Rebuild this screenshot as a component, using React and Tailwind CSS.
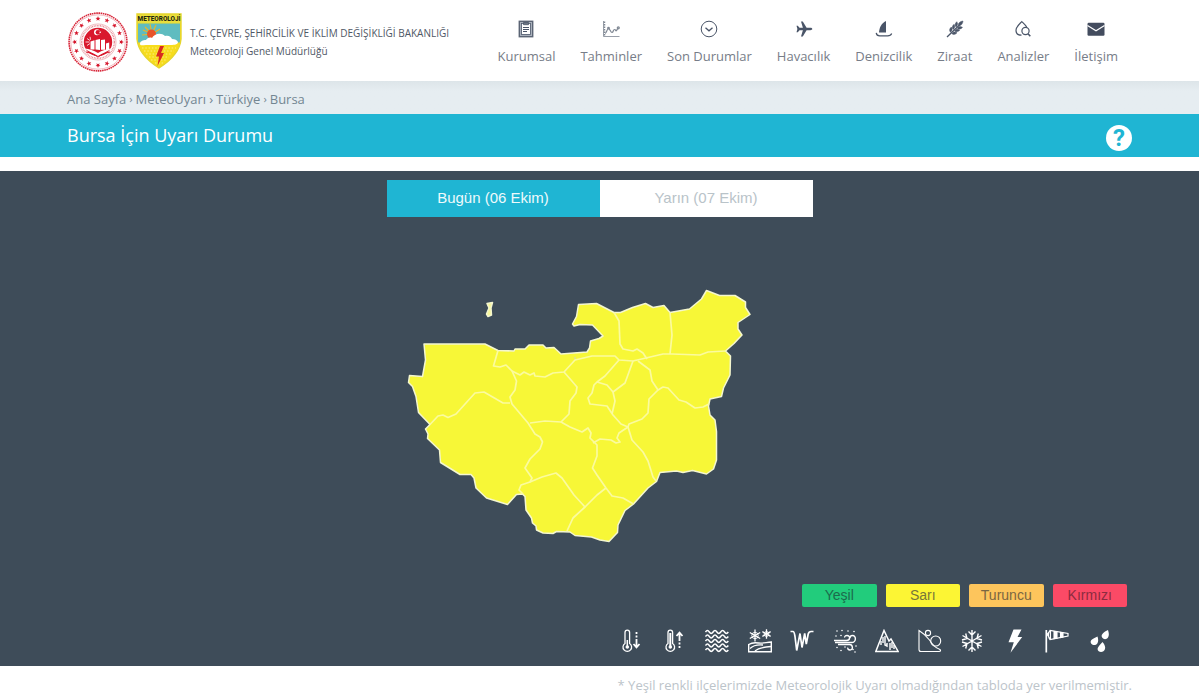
import React, { useState } from "react";

/* ---------- Logos ---------- */

function star(cx, cy, r, angle) {
  const pts = [];
  for (let i = 0; i < 10; i++) {
    const rad = i % 2 === 0 ? r : r * 0.42;
    const a = angle + (i * Math.PI) / 5;
    pts.push(`${(cx + Math.sin(a) * rad).toFixed(2)},${(cy - Math.cos(a) * rad).toFixed(2)}`);
  }
  return pts.join(" ");
}

function MinistryLogo() {
  const stars = Array.from({ length: 16 }, (_, i) => {
    const a = (i * Math.PI) / 8;
    return star(30 + Math.sin(a) * 23.3, 30 - Math.cos(a) * 23.3, 2.6, a);
  });
  return (
    <svg viewBox="0 0 60 60" className="h-[60px] w-[60px] shrink-0" role="img" aria-label="Bakanlık">
      <circle cx="30" cy="30" r="28.9" fill="#fff" stroke="#d8273a" strokeWidth="1.6" strokeDasharray="1.6 0.6" />
      <circle cx="30" cy="30" r="27.2" fill="none" stroke="#e5707c" strokeWidth="0.5" />
      {stars.map((p, i) => (
        <polygon key={i} points={p} fill="#d5152b" />
      ))}
      <circle cx="30" cy="30" r="18" fill="none" stroke="#e58a93" strokeWidth="0.6" />
      <circle cx="30" cy="30" r="16.3" fill="none" stroke="#e58a93" strokeWidth="1.5" strokeDasharray="0.9 0.7" />
      <circle cx="30" cy="30" r="14.2" fill="#d9182d" />
      <circle cx="29" cy="20.3" r="3" fill="#fff" />
      <circle cx="30" cy="20.3" r="2.4" fill="#d9182d" />
      <polygon points={star(32.2, 20.3, 1.3, -1.5)} fill="#fff" />
      <path d="M22.500 29.500l4-1.200v9.200h-4zM27.500 28l4.500-1v11l-4.500-.6zM33 28l4-0.600v10.400h-4zM38 31.500l3.200-1v7l-3.200.6z" fill="#fff" />
      <g stroke="#fff" strokeWidth="0.8">
        <path d="M17.500 30h4M19 26.500l3 2M19 33.500l3-2M22 24.800l.6 3" />
      </g>
      <path d="M16.500 36.500c5 .5 9 2 13.500 4.600 4-2.600 8.500-4.200 13.500-4.600-3.500 3-9 4.600-13.500 7.500-4.500-2.900-10-4.500-13.500-7.500z" fill="#fff" />
      <path d="M18 40c5 1 8 2.500 12 5 4-2.500 7-4 12-5" fill="none" stroke="#d9182d" strokeWidth="1" />
    </svg>
  );
}

function ShieldLogo() {
  const shield = "M1 1H45V26C44 38 34 48 23 55C12 48 2 38 1 26Z";
  return (
    <svg viewBox="0 0 46 56" className="h-[56px] w-[46px] shrink-0" role="img" aria-label="Meteoroloji">
      <defs>
        <clipPath id="shield-clip">
          <path d={shield} />
        </clipPath>
      </defs>
      <g clipPath="url(#shield-clip)">
        <rect width="46" height="56" fill="#f7dc1c" />
        <rect x="2" y="10.500" width="42" height="19" fill="#5fbcc0" />
        <g stroke="#e9b62a" strokeWidth="1.200">
          <path d="M16 21L7 17M16 21L9 14M16 21L14 11M16 21L20 12M16 21L24 16M16 21L6 22" />
        </g>
        <circle cx="15.500" cy="21" r="4.500" fill="#e8542a" />
        <path d="M4 31c0-3 3-4 6-4 1-2 4-3 6-2 2-4 9-6 13-2 4-1 6 1 7 3 3 0 5 1 6 3 0 3-5 3-9 3H10c-3 0-6 1-6-1z" fill="#fff" />
        <g stroke="#fbf2a0" strokeWidth="0.8" strokeDasharray="1.500 1.800">
          <path d="M6 35h34M8 38h30M10 41h26M13 44h20M15 47h16M19 50h8" />
        </g>
        <path d="M24 33h4l-3 7h3l-6.500 13 1.500-9.500h-3z" fill="#d92b1e" />
        <rect x="0" y="0" width="46" height="10" fill="#e9de3c" />
      </g>
      <path d={shield} fill="none" stroke="#e5d52c" strokeWidth="1.400" />
      <text x="23" y="8" textAnchor="middle" fontFamily="Roboto, sans-serif" fontWeight="800" fontSize="6.400" fill="#24260f">
        METEOROLOJİ
      </text>
    </svg>
  );
}

/* ---------- Navigation icons ---------- */

function NavIcon({ children }) {
  return (
    <svg viewBox="0 0 18 18" className="h-[18px] w-[18px]" fill="none" stroke="#4a5568" strokeWidth="1.200" aria-hidden="true">
      {children}
    </svg>
  );
}

const navItems = [
  {
    label: "Kurumsal",
    icon: (
      <>
        <rect x="2.300" y="1.300" width="13.400" height="15.400" strokeWidth="1.400" stroke="#5b6474" fill="#a9b0bb" />
        <rect x="4.500" y="3.500" width="9" height="11" fill="#fff" strokeWidth="0.8" />
        <path d="M6.500 2.500h5v2.200h-5z" fill="#6b7482" strokeWidth="0.800" />
        <path d="M6 7.500h6M6 9.500h6M6 11.500h4" strokeWidth="1" />
      </>
    ),
  },
  {
    label: "Tahminler",
    icon: (
      <g stroke="#7f8793" strokeWidth="1.200">
        <path d="M1.500 1v15.500H17.500" strokeWidth="0.800" />
        <path d="M2.500 1.500v14" strokeDasharray="1.500 1" strokeWidth="1.500" />
        <path d="M3 13.500c1.500 0 2-5 3.500-5s2 4 3.500 4 1-3 2.500-3 1 2 2 1 1-2.500 2-2.800" />
        <circle cx="6.500" cy="8.200" r="0.800" />
        <circle cx="16.300" cy="7.800" r="1" />
      </g>
    ),
  },
  {
    label: "Son Durumlar",
    icon: (
      <>
        <circle cx="9" cy="9" r="7.800" strokeWidth="1" />
        <path d="M5.500 7.800l3.500 3 3.500-3" strokeWidth="1.300" />
      </>
    ),
  },
  {
    label: "Havacılık",
    icon: (
      <path
        d="M17.300 9c0 .7-.9 1.200-2 1.200h-3.700L7.800 16.600H6l1.900-6.400H4.500l-1.700 2.100H1.500L2.400 9l-.9-3.300h1.300l1.700 2.100h3.400L6 1.400h1.800l3.800 6.400h3.700c1.100 0 2 .5 2 1.200z"
        fill="#4a5568"
        stroke="none"
      />
    ),
  },
  {
    label: "Denizcilik",
    icon: (
      <>
        <path d="M11 1v11.500H4C4.300 8 6 3.500 11 1z" fill="#4a5568" stroke="none" />
        <path d="M1.200 12.800c.3 2.200 1.500 3 3.500 3h8c2 0 3.400-.9 4-2.300" />
      </>
    ),
  },
  {
    label: "Ziraat",
    icon: (
      <>
        <path d="M1 17L14 4.500" strokeWidth="1.300" />
        <g fill="#4a5568" stroke="#4a5568" strokeWidth="0.500">
          <path d="M12.500 5.500c-.5-2.500 1.500-4 4.500-4.500-.3 3-2 5-4.500 4.500z" />
          <path d="M10 6.900c-1.500-1.700-1-3.500.8-5.200 1.300 1.900 1 4-.8 5.200zM7.200 9.500c-1.500-1.700-1-3.500.8-5.200 1.300 1.900 1 4-.8 5.200zM4.500 12.200C3 10.500 3.500 8.700 5.300 7c1.300 1.900 1 4-.8 5.200z" />
          <path d="M11.300 8.200c1.700 1.500 3.500 1 5.200-.8-1.900-1.300-4-1-5.200.8zM8.600 10.900c1.700 1.500 3.500 1 5.200-.8-1.900-1.300-4-1-5.200.8zM5.800 13.600c1.700 1.500 3.500 1 5.200-.8-1.900-1.300-4-1-5.200.8z" />
        </g>
      </>
    ),
  },
  {
    label: "Analizler",
    icon: (
      <>
        <path d="M7.500 15.200C4 15.200 2 13 2 10.200 2 7 5 4.500 7.800 1.600c2 2 3.700 3.500 4.900 5.400" />
        <circle cx="11.500" cy="11" r="3.600" />
        <path d="M14 13.700l2.300 2.500" strokeWidth="1.500" />
      </>
    ),
  },
  {
    label: "İletişim",
    icon: (
      <>
        <rect x="0.500" y="2.700" width="17" height="13" rx="1.200" fill="#434c5e" stroke="none" />
        <path d="M0.500 5.500L9 10.700l8.500-5.200" stroke="#fff" strokeWidth="1.200" />
      </>
    ),
  },
];

/* ---------- Hazard icons ---------- */

const thermometer = (
  <>
    <path d="M5 14.500V3.500a2.300 2.300 0 0 1 4.600 0v11a4.300 4.300 0 1 1-4.600 0z" strokeWidth="1.300" />
    <circle cx="7.300" cy="18" r="1.800" fill="#fff" stroke="none" />
  </>
);

const flake = (cx, cy, r) => (
  <path
    strokeWidth="1.300"
    d={[0, 60, 120]
      .map((deg) => {
        const a = (deg * Math.PI) / 180;
        const x = Math.sin(a) * r;
        const y = Math.cos(a) * r;
        return `M${cx - x} ${cy - y}L${cx + x} ${cy + y}`;
      })
      .join("")}
  />
);

const hazards = [
  {
    name: "Soğuk",
    art: (
      <>
        {thermometer}
        <path d="M7.300 11v6" strokeWidth="1.500" />
        <path d="M16.500 3v10" strokeDasharray="2 1.500" strokeWidth="1.800" />
        <path d="M16.500 12v6M13.500 15l3 3.300 3-3.300" strokeWidth="1.800" />
      </>
    ),
  },
  {
    name: "Sıcak",
    art: (
      <>
        {thermometer}
        <path d="M7.300 4v13" strokeWidth="2" />
        <path d="M16.500 19V9" strokeDasharray="2 1.500" strokeWidth="1.800" />
        <path d="M16.500 10V4M13.500 7l3-3.300 3 3.300" strokeWidth="1.800" />
      </>
    ),
  },
  {
    name: "Sis",
    art: (
      <path
        d={[3, 7.500, 12, 16.500, 21]
          .map((y) => `M.5 ${y}q1.900-2.800 3.800 0t3.800 0t3.800 0t3.800 0t3.800 0t3.800 0`)
          .join("")}
        strokeWidth="1.500"
      />
    ),
  },
  {
    name: "Zirai Don",
    art: (
      <>
        {flake(7, 6.5, 6)}
        {flake(18.5, 5, 4.8)}
        <circle cx="7" cy="6.500" r="3.200" strokeWidth="0.900" />
        <circle cx="18.500" cy="5" r="2.400" strokeWidth="0.900" />
        <path d="M.7 22.800V15.500c4-2.500 6.500-2 10-1.500 4 .6 8-.8 12.600-1v9.800z" strokeWidth="1.400" />
        <path d="M2 19.500c4-4 8-4 13-3.500M7 22c3-3 8-4 16-4.500" strokeWidth="1.300" />
      </>
    ),
  },
  {
    name: "Buzlanma ve Don",
    art: (
      <path d="M.5 2.500h2.500c1.200 0 1.500 2 2 5l1.700 14L10 4.500l2 14 2.700-14 1.600 10.500 1.900-10c.5-2 1.200-2.500 3-2.500h2.300" strokeWidth="1.700" />
    ),
  },
  {
    name: "Rüzgar",
    art: (
      <>
        <path d="M1 11.500h12.500c4 0 4-5 .5-5-1.800 0-2.500 1-2.300 2M2 13.500h16.500c5 0 5-7 1-7-1.900 0-2.700 1.200-2.300 2.700M5 15.500h11.500c3.500 0 4 5.500.5 5.500-1.800 0-2.600-1.200-2-2.300" strokeWidth="1.400" />
        <g fill="#fff" stroke="none">
          {[[4, 2], [9, 1.5], [15, 2], [21, 2.5], [3, 7], [8, 6.5], [23, 17], [4, 18.5], [8, 21.5], [12, 18], [20, 20.5], [22, 23]].map(([x, y], i) => (
            <circle key={i} cx={x} cy={y} r="0.800" />
          ))}
        </g>
      </>
    ),
  },
  {
    name: "Çığ",
    art: (
      <>
        <path d="M.8 22.500L9 1.500l5 10.500 2-2 7.200 12.500z" strokeWidth="1.500" />
        <path d="M8 8v6M6 12v4M10 7v9l2 1v-3M15 14v7M17 13v6M19 16v4" strokeWidth="1.400" />
      </>
    ),
  },
  {
    name: "Heyelan",
    art: (
      <>
        <path d="M1 1.500v19c0 1.500.5 2 2 2h18c2 0 2-1.500.5-2.200-5-1.700-7-4.300-10-9.300C8.500 7 5 4 1 1.500z" />
        <circle cx="10" cy="4" r="2.600" />
        <circle cx="17.700" cy="12" r="5" />
      </>
    ),
  },
  {
    name: "Kar",
    art: (
      <path
        d="M12 1v22M2.500 6.500l19 11M21.500 6.500l-19 11M8.500 2.500L12 6l3.500-3.500M8.500 21.500L12 18l3.500 3.500M2 11l5-1.500L5.700 4.500M22 13l-5 1.500 1.300 5M18.300 4.500L17 9.500l5 1.500M5.700 19.500L7 14.500 2 13"
        strokeWidth="1.400"
      />
    ),
  },
  { name: "Fırtına", art: <path d="M10.500.5h8l-4 7.500h4.700L7.500 23.800l3.300-10.500H5.500z" fill="#fff" stroke="none" /> },
  {
    name: "Kuvvetli Rüzgar",
    art: (
      <>
        <path d="M1.300 1v22.500" strokeWidth="1.700" />
        <path d="M2 5.500L5 2M2 5.500l3 4M5 1.500c-2 2-2 7 0 9l18-3.500V4.500z" strokeWidth="1.200" />
        <path d="M9 2.300v7.400l3-.5V2.900zM15.500 3.500v5l2.500-.5V4zM5.500 2v8" fill="#fff" />
      </>
    ),
  },
  {
    name: "Yağış",
    art: (
      <g fill="#fff" stroke="none">
        <path d="M20 1c1 3.500 1.200 5.500 0 7.500-1.400 2.200-4.300 2.200-5.700.3C12 5.500 16 3 20 1z" />
        <path d="M9.500 7.500c.9 3 1 5.200-.2 7-1.500 2-4.500 2-6 .2C1 11 5.500 9.500 9.500 7.500z" />
        <path d="M14.500 13c2.500 3 3 5 2.500 7-.8 2.800-4.200 3.800-6.300 2.200-3-2.700.8-5.700 3.800-9.200z" />
      </g>
    ),
  },
];

/* ---------- Province map ---------- */

const provinceOutline =
  "424,344 485,344 498,350.500 514,351 515,349 525,349 529,345 543,345 546,348 554,347.500 561,354 587,352 589.500,348 590.500,341 599,338.500 603,336 592.500,325 580,324.500 574,326 572.500,324 576.500,316.500 578.500,304.500 596.500,303.500 614,312.500 620.500,312.500 632.500,307.500 645.500,303.500 653,307.500 664,305.500 670,312.500 689.500,309 701.500,299 706.500,290.500 719.500,295.500 735,295.500 745.500,302 745.500,307.500 750,314.500 738,322.500 738,329 742,335 734,343.500 725.500,351 730.500,356 730,375 723.500,388 721.500,396.500 710,399 708.500,406 710,415 715,420 716.500,431.500 716.500,460 713.500,469 706.500,474 692.500,470.500 683,472.500 676.500,471 660,472.500 656.500,481.500 648,488 633.500,504 625,510.500 618,525 617.500,532.500 609,541.500 600,540 591.500,537 575,535.500 570,532 556.500,531.500 553,533.500 543,533 536.500,530 536,526 532.500,523 531.500,518 526,510 525,496.500 522.500,494 516.500,494.500 507.500,504.500 486.500,498 476,488 474,478 471,474.500 460,474.500 440.500,462.500 439.500,450 427.500,438.500 428,434 425.500,429 430,424.500 418.500,412.500 416,396.500 412.500,386.500 408.500,382.500 409.500,375.500 422.500,376.500 425.500,360";

const districtBorders = [
  "498,350.500 493.500,366 500,367 506,365 512,371 516.500,381 515,390 510,397 512,404 528,423 535,434 540,437 542.500,442 540,449 530,459 525,468 532,478 530,482 521,485 519,490 523,494",
  "430,424.500 438,416 443,415 448,417.500 456,414 475,393 484,392 503,403 510,403",
  "512,371 520,375 524,372 530,375 534,373 535,376 545,377 549,375 553,373 564,372 575,360 592,356 615,356 619,360 633,361 663,354 672,354 700,355 708,352 725.500,351",
  "564,372 571,380 577,387 576,393 570,401 569,414 561,422 545,421 530,423",
  "561,422 570,427 582,432 588,428 591,433 590,438 597,445 597,456 592.500,468 597,475 606,488 612,496 623,498 633.500,504",
  "614,312.500 619,321 620,344 623,349 633,351 637,349 643,353 647,359",
  "670,312.500 672,335 670,354",
  "619,360 605,376 597,382 594,385 592,393 588,398 590,404 607,406 613,415 621,424 628,427 619,433 617,438 620,442 616,443 611,440 600,439 593,443",
  "633,361 625,383 613,392 615,401 612,414",
  "597,382 607,385 613,392",
  "638,361 650,370 652,381 658,390 649,399 648,413 642,419 629,424 628,427 632,440 643,452 648,461 653,477 656,481",
  "658,390 663,387 668,388 679,400 686,402 695,408 703,407 709,404",
  "530,482 542,477 556,473 562,478 574,495 585,507 597,495 606,488",
  "585,507 573,518 567,531",
];

function ProvinceMap() {
  return (
    <svg viewBox="400 280 360 270" className="h-[270px] w-[360px]" strokeLinejoin="round" role="img" aria-label="Bursa haritası">
      <polygon points={provinceOutline} fill="#f7f737" stroke="#f4f6cf" strokeWidth="1.500" />
      <polygon points="487,303.500 492.500,302.500 491,308 491.500,315 488,316.500 486.500,314 489,308" fill="#f7f79a" stroke="#f4f6cf" strokeWidth="1.500" />
      <g fill="none" stroke="#fbfb9e" strokeWidth="1.700">
        {districtBorders.map((points) => (
          <polyline key={points} points={points} />
        ))}
      </g>
      <circle cx="575" cy="358" r="1" fill="#dcdc9c" />
    </svg>
  );
}

/* ---------- Page ---------- */

const days = ["Bugün (06 Ekim)", "Yarın (07 Ekim)"];

const levels = [
  { label: "Yeşil", style: "bg-[#22cc7c] text-[#1c6b4c]" },
  { label: "Sarı", style: "bg-[#fcf534] text-[#78763a]" },
  { label: "Turuncu", style: "bg-[#fdc55c] text-[#7b6642]" },
  { label: "Kırmızı", style: "bg-[#fb4a66] text-[#8c2c40]" },
];

export default function App() {
  const [day, setDay] = useState(0);
  return (
    <div className="bg-white font-['Open_Sans',sans-serif]">
      <header className="mx-auto flex h-[81px] max-w-[1065px] items-start justify-between">
        <a href="#" className="flex items-start pt-3 pl-px">
          <MinistryLogo />
          <span className="ml-2 pt-px">
            <ShieldLogo />
          </span>
          <span className="ml-2 flex flex-col pt-3 text-[10px] leading-[18px] font-medium whitespace-nowrap text-[#4f5866]">
            <span>T.C. ÇEVRE, ŞEHİRCİLİK VE İKLİM DEĞİŞİKLİĞİ BAKANLIĞI</span>
            <span>Meteoroloji Genel Müdürlüğü</span>
          </span>
        </a>
        <nav className="mr-[14px] flex gap-[25px] pt-5">
          {navItems.map((item) => (
            <a key={item.label} href="#" className="flex flex-col items-center gap-2 text-[13px] leading-5 whitespace-nowrap text-[#777d88]">
              <NavIcon>{item.icon}</NavIcon>
              {item.label}
            </a>
          ))}
        </nav>
      </header>

      <div className="bg-linear-to-b from-[#dde5e9] to-[#e6edf1] to-30%">
        <nav aria-label="Konum" className="mx-auto flex h-[33px] max-w-[1065px] items-center gap-[3px] pt-1 text-[13px] text-[#738692]">
          <a href="#">Ana Sayfa</a>
          <span className="text-[11px]">›</span>
          <a href="#">MeteoUyarı</a>
          <span>›</span>
          <a href="#">Türkiye</a>
          <span className="text-[11px]">›</span>
          <a href="#">Bursa</a>
        </nav>
      </div>

      <div className="bg-[#1fb5d3]">
        <div className="mx-auto flex h-[43px] max-w-[1065px] items-center justify-between">
          <h1 className="text-[18px] text-white">Bursa İçin Uyarı Durumu</h1>
          <button type="button" aria-label="Yardım" className="mt-1 h-[26px] w-[26px] rounded-full bg-white font-[Roboto,sans-serif] text-[24px] leading-[26px] font-bold text-[#1fb5d3]">
            ?
          </button>
        </div>
      </div>

      <main className="mt-[14px]">
        <section className="bg-[#3e4c59] pt-[9px] pb-[13px]">
          <div className="mx-auto grid w-[426px] grid-cols-2 font-['Liberation_Sans',Arial,sans-serif] text-[15px]">
            {days.map((label, i) => (
              <button
                key={label}
                type="button"
                aria-pressed={day === i}
                onClick={() => setDay(i)}
                className={day === i ? "h-[37px] bg-[#1fb5d3] text-[#eefafc]" : "h-[37px] bg-white text-[#b9c3c9]"}
              >
                {label}
              </button>
            ))}
          </div>

          <div className="mx-auto mt-[63px] w-[400px]">
            <ProvinceMap />
          </div>

          <div className="mx-auto mt-[34px] flex max-w-[1065px] flex-col items-end">
            <ul className="mr-[5px] grid w-[325px] grid-cols-4 gap-[9px] font-['Liberation_Sans',Arial,sans-serif] text-[14px]">
              {levels.map((level) => (
                <li key={level.label} className={`rounded-xs text-center leading-[23px] ${level.style}`}>
                  {level.label}
                </li>
              ))}
            </ul>
            <ul className="mt-[22px] mr-5 flex w-[492px] justify-between">
              {hazards.map((h) => (
                <li key={h.name} title={h.name}>
                  <svg viewBox="0 0 24 24" className="h-6 w-6" fill="none" stroke="#fff" strokeWidth="1.100" role="img" aria-label={h.name}>
                    {h.art}
                  </svg>
                </li>
              ))}
            </ul>
          </div>
        </section>
        <p className="mx-auto max-w-[1065px] pt-[9px] text-right text-[13px] leading-5 text-[#bcc4ca]">
          * Yeşil renkli ilçelerimizde Meteorolojik Uyarı olmadığından tabloda yer verilmemiştir.
        </p>
      </main>
    </div>
  );
}
